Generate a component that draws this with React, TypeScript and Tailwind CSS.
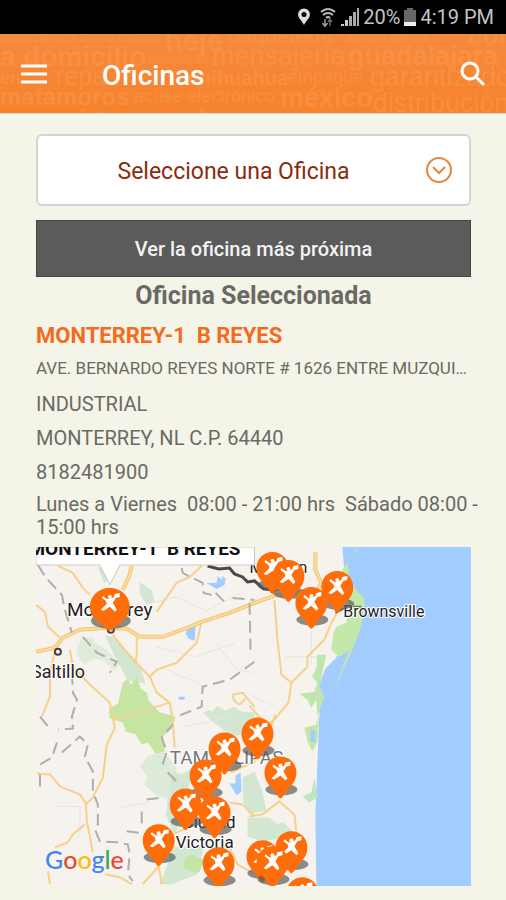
import { useState } from "react";

const offices = ["Seleccione una Oficina", "MONTERREY-1  B REYES", "BROWNSVILLE", "CIUDAD VICTORIA"];

const headerWords = [
  { t: "documentos envio cuenta", x: 0, y: 8, s: 14, b: false },
  { t: "heje", x: 165, y: 17, s: 29, b: true },
  { t: "paquetería", x: 228, y: 9, s: 22, b: false },
  { t: "aguascalientes", x: 345, y: 7, s: 14, b: false },
  { t: "com", x: 468, y: 11, s: 26, b: true },
  { t: "a domicilio", x: 0, y: 32, s: 28, b: true },
  { t: "documento", x: 148, y: 30, s: 12, b: false },
  { t: "mensajería", x: 212, y: 31, s: 27, b: false },
  { t: "guadalajara", x: 348, y: 31, s: 27, b: true },
  { t: "en", x: 0, y: 50, s: 18, b: true },
  { t: "repa", x: 56, y: 51, s: 25, b: false },
  { t: "chihuahua", x: 188, y: 51, s: 20, b: true },
  { t: "empaque", x: 288, y: 49, s: 18, b: false },
  { t: "garantizado", x: 370, y: 52, s: 27, b: false },
  { t: "matamoros", x: 0, y: 71, s: 24, b: true },
  { t: "acuse electronico", x: 134, y: 68, s: 18, b: false },
  { t: "méxico", x: 280, y: 73, s: 27, b: true },
  { t: "distribución", x: 373, y: 78, s: 27, b: false },
  { t: "internacional", x: 80, y: 90, s: 20, b: true },
];

// x and y of each tip
const pins = [
  [237, 47], [253, 55], [302, 66], [276, 82],
  [222, 213], [189, 228], [170, 255], [245, 252],
  [150, 284], [179, 292], [123, 320],
  [183, 343], [227, 336], [256, 327], [237, 342], [267, 373],
];

const roads = [
  "M22 19 37 26 47 41 54 48",
  "M166 19 154 30 141 36 127 56 121 65",
  "M77 88 91 106 114 130 121 146 134 156 137 173 139 201",
  "M166 75 161 96 141 116 121 123 114 130",
  "M101 91V108L99 118",
  "M0 58 9 65 12 80 24 91",
  "M19 103 14 126V150L6 170",
  "M34 103 37 120 52 136 74 156 79 181 71 198 67 231 57 251 50 258 51 275 57 306",
  "M77 172 100 167 134 156",
  "M1 227 14 228 24 240 44 248 50 257",
  "M49 278 37 288 32 296 19 301",
  "M123 320 107 338M123 320 126 338",
  "M69 328 84 331 96 338M12 325 14 338",
  "M239 53 242 93 246 128 256 136 272 120V110L289 93 296 76 302 66",
  "M256 136 253 156 239 173 222 185",
  "M219 160 207 146 197 148Q198 156 204 158L210 152M214 159 232 180",
  "M214 270 227 268 244 255 259 268 261 285",
  "M194 256 207 258 219 270M194 301 202 318 219 328",
  "M139 287 165 275M195 226 219 215 232 190 240 168",
];

const mainRoad = "M0 105 19 101 27 91 44 83 71 81 91 82 104 90 127 90 154 80 166 75 194 66 219 56 239 49 281 43 302 60M96 19 93 30 87 43M280 5V23L286 36 282 43";

const borders = [
  "M2 18 10 31 26 48 29 63 36 86",
  "M47 90 61 106 81 115 74 126",
  "M219 115 194 133 167 140 166 160 141 170",
  "M214 56 215 103",
  "M146 21 147 26 167 36 168 46 176 48M180 46 191 57M197 51 219 53",
  "M36 126 37 146 41 153 36 170 37 182 22 183",
  "M4 170 12 180M4 218 16 211 21 196M26 206 44 190 52 198 49 210 57 225V245L62 258V278L59 283 64 295 81 296 92 298 94 308 92 328 97 335",
  "M4 228V241M91 285 107 287M106 265V278M111 253 127 251",
  "M127 218 131 205 126 191 137 178M132 226 142 236",
];

function Pin({ x, y, big }: { x: number; y: number; big?: boolean }) {
  return (
    <g transform={`translate(${x} ${y})`}>
      <ellipse cx="1" cy="-9" rx={big ? 20 : 16} ry={big ? 8 : 6} fill="#55524f" opacity="0.65" />
      {big ? (
        <path d="M0 1C-3 1 -5 -3 -9 -6C-15 -10 -20 -15 -20 -23C-20 -34 -11 -42 0 -42S20 -34 20 -23C20 -15 15 -10 9 -6C5 -3 3 1 0 1Z" fill="#ff6c0a" />
      ) : (
        <path d="M0 0C-2 0 -4 -5 -8 -10C-12 -14 -16 -18 -16 -26C-16 -35 -9 -42 0 -42S16 -35 16 -26C16 -18 12 -14 8 -10C4 -5 2 0 0 0Z" fill="#ff6c0a" />
      )}
      {/* running courier with a parcel */}
      <g transform="translate(0 -26)" fill="#fff">
        <path d="M-8 -6 -7 -8 -3 -5 0 -5 4 -7 5 -10 10 -11 10 -7 6 -6 3 -1 7 6 5 8 0 3 -6 7 -9 6 -3 0 -4 -3Z" />
        <circle cx="0" cy="-7" r="2" />
      </g>
    </g>
  );
}

function OfficeMap() {
  return (
    <svg viewBox="0 0 436 340" className="block w-full font-[Roboto,sans-serif]" role="img" aria-label="Mapa de oficinas">
      <rect width="436" height="340" fill="#f6f3ee" />

      {/* parks and mountains */}
      <g fill="#d3e6d1">
        <path d="M69 88 81 92 104 119 110 137 92 134 78 108Z" />
        <path d="M104 35 116 43 119 56 111 58 104 47Z" />
        <path d="M62 20 68 20 72 34 68 36Z" />
        <path d="M168 166 173 163 177 165 181 159 190 164 198 160 206 165 219 166V190L207 188 195 190 184 180 175 174Z" />
        <path d="M127 204 134 212 141 222 138 240 136 262 130 252 121 249 108 238 112 230 104 220 112 210Z" opacity="0.7" />
        <path d="M137 225 146 228 156 222 152 250 139 290 130 268Z" />
        <path d="M137 300 168 301 162 328 136 338 124 338 132 318Z" />
        <path d="M207 231 219 225 227 245 231 264 214 268 208 256Z" />
        <path d="M212 271 234 271 242 278 248 276 257 285 240 293 227 295 212 290Z" />
        <path d="M45 92 56 90 60 96 72 104 84 118 78 124 68 114 58 112 48 118 40 106Z" opacity="0.6" />
      </g>
      <path d="M87 136 92 132 95 138 101 130 105 142 111 146 113 154 124 166 140 170 136 182 127 190 129 205 120 207 112 196 106 198 100 188 90 185 87 176 74 172 73 162 82 157Z" fill="#c5e6a2" />
      <path d="M150 311 156 308 168 314 164 326 157 325 147 321Z" fill="#c5e6a2" />

      {/* county lines */}
      <path d="M100 60 140 50 170 64 206 46M120 100 160 110 200 96M125 120 170 140M214 148 240 160M250 110H282M276 86V118M20 260H44V290M80 262 112 256M150 180 196 170M180 96 200 122 216 126" fill="none" stroke="#e8e4e0" />

      {/* sea */}
      <path d="M307 0H436V340H281L280 268 282 218 284 168 283 140 290 122 300 112 309 98 322 86 328 60 320 42 309 23Z" fill="#a3ccff" />
      <path d="M307 23 312 16 314 26 311 32 321 43 328 50 330 60 324 86 317 103 300 140 297 147 314 103 304 110 296 103 298 86 301 80 311 76 314 60 308 40Z" fill="#c3e8a9" />
      <path d="M282 108 291 108 287 126 284 140 289 150 282 170 281 153 276 161 272 153 264 147 279 145 282 136 277 130 281 121Z" fill="#bfe5b0" />
      <path d="M269 181 281 178 284 168 282 195 277 205 272 195Z" fill="#c3e8a9" />
      <path d="M275 182 280 185 280 197 275 194Z" fill="#a3ccff" />
      <path d="M267 250 276 246 279 231 282 251 274 256Z" fill="#bfe5c3" />
      <path d="M319 0 322 5" stroke="#bcdcba" strokeWidth="2" />

      {/* lakes */}
      <g fill="#a3ccff">
        <path d="M182 29 187 33 186 29 190 31 189 38 181 42 171 36 181 36Z" />
        <path d="M152 80 160 80 159 94 153 92 150 87Z" />
        <path d="M143 150H149V153H143Z" />
        <path d="M200 229 205 226 206 245 201 249 194 237 200 237Z" />
      </g>

      {/* roads */}
      <g fill="none" stroke="#f6d08c" strokeWidth="2" strokeLinejoin="round">
        {roads.map((d) => <path key={d} d={d} />)}
      </g>
      <path d={mainRoad} fill="none" stroke="#f3c479" strokeWidth="4" strokeLinejoin="round" />
      <path d={mainRoad} fill="none" stroke="#fbdc9a" strokeWidth="2" strokeLinejoin="round" />
      <g fill="none" stroke="#b0adab" strokeWidth="2" strokeDasharray="12 6">
        {borders.map((d) => <path key={d} d={d} />)}
      </g>
      <path d="M172 19 183 22 194 21 199 27 207 30 212 35 219 34 228 42 238 43" fill="none" stroke="#4b4947" strokeWidth="3" />
      <path d="M300 66 312 60 326 60" fill="none" stroke="#6b6b6b" strokeWidth="2" />

      {/* place names */}
      <g fill="#222" stroke="#fff" strokeWidth="2" paintOrder="stroke">
        <text x="31" y="69" fontSize="19">Monterrey</text>
        <text x="-5" y="131" fontSize="18">Saltillo</text>
        <text x="308" y="70" fontSize="16">Brownsville</text>
        <text x="214" y="26" fontSize="16">McAllen</text>
        <text x="134" y="218" fontSize="19" fill="#777">TAMAULIPAS</text>
        <text x="147" y="282" fontSize="17">Ciudad</text>
        <text x="140" y="302" fontSize="17">Victoria</text>
      </g>
      <g fill="#fff" stroke="#444" strokeWidth="2">
        <circle cx="22" cy="105" r="3" />
        <circle cx="75" cy="83" r="3" />
      </g>

      {pins.map(([x, y]) => <Pin key={`${x}-${y}`} x={x} y={y} />)}
      <Pin x={74} y={83} big />

      {/* info window */}
      <path d="M0 0H219V18H84L74 38 64 18H0Z" fill="#fff" stroke="#c9c7c4" />
      <text x="205" y="8" textAnchor="end" fontSize="19" fontWeight="700" fill="#111">{"MONTERREY-1\u00a0 B REYES"}</text>

      <text x="9" y="323" fontSize="25" fontFamily="Lato, sans-serif" fontWeight="500">
        <tspan fill="#4285f4">G</tspan>
        <tspan fill="#ea4335">o</tspan>
        <tspan fill="#fbbc05">o</tspan>
        <tspan fill="#4285f4">g</tspan>
        <tspan fill="#34a853">l</tspan>
        <tspan fill="#ea4335">e</tspan>
      </text>
    </svg>
  );
}

function StatusBar() {
  return (
    <div className="flex h-[34px] items-center justify-end bg-black pr-3 text-xl text-[#c4c4c4]">
      <svg width="14" height="18" viewBox="0 0 14 18" className="mr-2">
        <path d="M7 17C5 13 1 10 1 6.500A6 6 0 0 1 13 6.500C13 10 9 13 7 17ZM7 4A2.500 2.500 0 1 0 7 9A2.500 2.500 0 1 0 7 4Z" fill="#ddd" fillRule="evenodd" />
      </svg>
      <svg width="18" height="20" viewBox="0 0 18 20" className="mr-1">
        <path d="M2 5Q9 -1 16 5M4 8Q9 4 14 8M7 11Q9 9 11 11" fill="none" stroke="#bbb" strokeWidth="2" />
        <path d="M6 12V19M3.500 16 6 19.500 8.500 16" stroke="#999" strokeWidth="1.500" fill="none" />
        <path d="M11 19V13M9 15 11 12 13 15" stroke="#666" strokeWidth="1.500" fill="none" />
      </svg>
      <svg width="18" height="18" viewBox="0 0 18 18" className="mr-1">
        <path d="M0 16H3V18H0ZM4 12H7V18H4Z" fill="#ccc" />
        <path d="M8 8H11V18H8ZM12 4H15V18H12ZM16 0H18V18H16Z" fill="#aaa" />
      </svg>
      <span>20%</span>
      <svg width="12" height="18" viewBox="0 0 12 18" className="mx-1">
        <path d="M3 0H9V2H12V18H0V2H3Z" fill="#686868" />
        <path d="M0 14H12V18H0Z" fill="#eee" />
      </svg>
      <span>4:19 PM</span>
    </div>
  );
}

export default function App() {
  const [office, setOffice] = useState(offices[0]);

  return (
    <div className="min-h-screen bg-[#f4f4e8] font-[Roboto,sans-serif] text-[#6a6a64]">
      <StatusBar />

      <header className="relative flex h-[79px] items-center overflow-hidden bg-linear-to-b from-[#f68a3c] to-[#f6822c] px-5 text-white">
        <svg className="absolute inset-0 h-full w-full" aria-hidden="true">
          <g fill="#fa9a50" opacity="0.5" fontFamily="Liberation Sans, sans-serif">
            {headerWords.map((w) => (
              <text key={w.t} x={w.x} y={w.y} fontSize={w.s} fontWeight={w.b ? 700 : 400}>{w.t}</text>
            ))}
          </g>
        </svg>
        <button aria-label="Menú" className="relative">
          <svg width="28" height="20" viewBox="0 0 28 20">
            <path d="M1 2H27M1 10H27M1 18H27" stroke="#fff" strokeWidth="3" />
          </svg>
        </button>
        <h1 className="relative ml-[54px] flex-1 pt-1 text-[28px] leading-8 font-medium">Oficinas</h1>
        <button aria-label="Buscar" className="relative">
          <svg width="26" height="26" viewBox="0 0 26 26" fill="none" stroke="#fff" strokeWidth="3">
            <circle cx="10" cy="10" r="8" />
            <path d="M15 15 24 24" />
          </svg>
        </button>
      </header>

      <main className="border-t border-[#dcdcd2] pt-5 pr-[35px] pb-3 pl-9">
        <div className="relative">
          <select
            aria-label="Oficina"
            value={office}
            onChange={(e) => setOffice(e.target.value)}
            className="h-[72px] w-full appearance-none rounded-md border-2 border-[#d4d4d4] bg-white pt-1 pr-10 text-center text-[23px] text-[#8a2c0e] [text-align-last:center]"
          >
            {offices.map((o) => <option key={o}>{o}</option>)}
          </select>
          <svg width="28" height="28" viewBox="0 0 28 28" className="pointer-events-none absolute top-[22px] right-[18px]" fill="none" stroke="#e3863f" strokeWidth="2">
            <circle cx="14" cy="14" r="12" />
            <path d="M8 11 14 17 20 11" />
          </svg>
        </div>

        <button className="mt-[14px] h-[57px] w-full border border-[#444] bg-[#5b5b5b] text-xl font-medium text-[#f2f2f2]">
          Ver la oficina más próxima
        </button>

        <h2 className="pt-1 text-center text-[25px] leading-[30px] font-bold">Oficina Seleccionada</h2>
        <h3 className="mt-2 text-[22px] leading-[34px] font-bold whitespace-pre text-[#f36b1c]">{"MONTERREY-1  B REYES"}</h3>
        <p className="mb-1 truncate text-[17px] leading-[30px]">AVE. BERNARDO REYES NORTE # 1626 ENTRE MUZQUIZ Y ARTEAGA</p>
        <p className="text-xl leading-[34px]">INDUSTRIAL</p>
        <p className="text-xl leading-[34px]">MONTERREY, NL C.P. 64440</p>
        <p className="text-xl leading-[34px]">8182481900</p>
        <p className="mt-1 mb-2 text-xl leading-[23px] whitespace-pre">{"Lunes a Viernes  08:00 - 21:00 hrs  Sábado 08:00 -\n15:00 hrs"}</p>
        <OfficeMap />
      </main>
    </div>
  );
}
